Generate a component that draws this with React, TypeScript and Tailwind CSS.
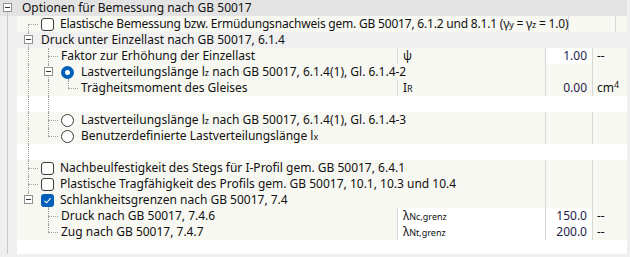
import React from "react";

type Ctrl = "none" | "check" | "checked" | "radio" | "radioOn";

type Row = {
  bg: "cream" | "gray" | "white";
  text?: React.ReactNode;
  pad?: string;
  tight?: boolean;
  ctrl?: Ctrl;
  box?: string;
  ctrlLeft?: string;
  v?: string[];
  h?: string;
  grid?: boolean;
  sym?: React.ReactNode;
  symWhite?: boolean;
  val?: string;
  valWhite?: boolean;
  unit?: React.ReactNode;
};

const font = { fontFamily: '"Noto Sans", "Open Sans", sans-serif' };

const Minus = ({ left }: { left: string }) => (
  <span
    className={`absolute top-[3px] ${left} w-[9px] h-[9px] border border-[#8f8f8f] bg-white flex items-center justify-center z-10`}
  >
    <span className="w-[5px] h-px bg-[#333]" />
  </span>
);

const Control = ({ kind }: { kind: Ctrl }) => {
  if (kind === "check")
    return <span className="block w-[13px] h-[13px] rounded-[3px] border border-[#3b3b3b] bg-white" />;
  if (kind === "checked")
    return (
      <span className="flex w-[13px] h-[13px] rounded-[3px] bg-[#005fb8] items-center justify-center">
        <svg width="9" height="9" viewBox="0 0 9 9">
          <path d="M1.5 4.8 L3.6 6.8 L7.6 2.2" fill="none" stroke="white" strokeWidth="1.1" />
        </svg>
      </span>
    );
  if (kind === "radio")
    return <span className="block w-[13px] h-[13px] rounded-full border border-[#3b3b3b] bg-white" />;
  if (kind === "radioOn")
    return (
      <span className="flex w-[13px] h-[13px] rounded-full bg-[#005fb8] items-center justify-center">
        <span className="w-[5px] h-[5px] rounded-full bg-white" />
      </span>
    );
  return null;
};

// subscripts sit on the baseline in a smaller size
const Sub = ({ children }: { children: React.ReactNode }) => (
  <span className="text-[9px] leading-none">{children}</span>
);

const rows: Row[] = [
  {
    bg: "cream",
    v: ["left-[11px] top-[8px] h-[8px]"],
    h: "left-[11px] w-[10px]",
    ctrl: "check",
    ctrlLeft: "left-[24px]",
    pad: "pl-[43px]",
    tight: true,
    grid: true,
    text: (
      <>
        Elastische Bemessung bzw. Ermüdungsnachweis gem. GB 50017, 6.1.2 und 8.1.1 (γ<Sub>y</Sub> = γ<Sub>z</Sub> = 1.0)
      </>
    ),
  },
  {
    bg: "gray",
    v: ["left-[11px] top-0 h-[16px]"],
    box: "left-[7px]",
    pad: "pl-[24px]",
    text: "Druck unter Einzellast nach GB 50017, 6.1.4",
  },
  {
    bg: "cream",
    v: ["left-[11px] top-0 h-[16px]", "left-[31px] top-0 h-[16px]"],
    h: "left-[31px] w-[10px]",
    pad: "pl-[44px]",
    grid: true,
    text: "Faktor zur Erhöhung der Einzellast",
    sym: "ψ",
    val: "1.00",
    valWhite: true,
    unit: "--",
  },
  {
    bg: "cream",
    v: ["left-[11px] top-0 h-[16px]", "left-[31px] top-0 h-[16px]", "left-[51px] top-[8px] h-[8px]"],
    box: "left-[27px]",
    ctrl: "radioOn",
    ctrlLeft: "left-[44px]",
    pad: "pl-[64px]",
    grid: true,
    text: (
      <>
        Lastverteilungslänge l<Sub>z</Sub> nach GB 50017, 6.1.4(1), Gl. 6.1.4-2
      </>
    ),
  },
  {
    bg: "cream",
    v: ["left-[11px] top-0 h-[16px]", "left-[31px] top-0 h-[16px]", "left-[51px] top-0 h-[8px]"],
    h: "left-[51px] w-[10px]",
    pad: "pl-[64px]",
    grid: true,
    text: "Trägheitsmoment des Gleises",
    sym: (
      <>
        I<Sub>R</Sub>
      </>
    ),
    val: "0.00",
    unit: (
      <>
        cm<span className="text-[9px] leading-none align-top">4</span>
      </>
    ),
  },
  {
    bg: "white",
    v: ["left-[11px] top-0 h-[16px]", "left-[31px] top-0 h-[16px]"],
  },
  {
    bg: "cream",
    v: ["left-[11px] top-0 h-[16px]", "left-[31px] top-0 h-[16px]"],
    h: "left-[31px] w-[10px]",
    ctrl: "radio",
    ctrlLeft: "left-[44px]",
    pad: "pl-[64px]",
    grid: true,
    text: (
      <>
        Lastverteilungslänge l<Sub>z</Sub> nach GB 50017, 6.1.4(1), Gl. 6.1.4-3
      </>
    ),
  },
  {
    bg: "cream",
    v: ["left-[11px] top-0 h-[16px]", "left-[31px] top-0 h-[8px]"],
    h: "left-[31px] w-[10px]",
    ctrl: "radio",
    ctrlLeft: "left-[44px]",
    pad: "pl-[64px]",
    grid: true,
    text: (
      <>
        Benutzerdefinierte Lastverteilungslänge l<Sub>x</Sub>
      </>
    ),
  },
  {
    bg: "white",
    v: ["left-[11px] top-0 h-[16px]"],
  },
  {
    bg: "cream",
    v: ["left-[11px] top-0 h-[16px]"],
    h: "left-[11px] w-[10px]",
    ctrl: "check",
    ctrlLeft: "left-[24px]",
    pad: "pl-[43px]",
    grid: true,
    text: "Nachbeulfestigkeit des Stegs für I-Profil gem. GB 50017, 6.4.1",
  },
  {
    bg: "cream",
    v: ["left-[11px] top-0 h-[16px]"],
    h: "left-[11px] w-[10px]",
    ctrl: "check",
    ctrlLeft: "left-[24px]",
    pad: "pl-[43px]",
    grid: true,
    text: "Plastische Tragfähigkeit des Profils gem. GB 50017, 10.1, 10.3 und 10.4",
  },
  {
    bg: "cream",
    v: ["left-[11px] top-0 h-[8px]", "left-[31px] top-[8px] h-[8px]"],
    box: "left-[7px]",
    ctrl: "checked",
    ctrlLeft: "left-[24px]",
    pad: "pl-[43px]",
    grid: true,
    text: "Schlankheitsgrenzen nach GB 50017, 7.4",
  },
  {
    bg: "cream",
    v: ["left-[31px] top-0 h-[16px]"],
    h: "left-[31px] w-[10px]",
    pad: "pl-[44px]",
    grid: true,
    text: "Druck nach GB 50017, 7.4.6",
    sym: (
      <>
        λ<Sub>Nc,grenz</Sub>
      </>
    ),
    symWhite: true,
    val: "150.0",
    valWhite: true,
    unit: "--",
  },
  {
    bg: "cream",
    v: ["left-[31px] top-0 h-[8px]"],
    h: "left-[31px] w-[10px]",
    pad: "pl-[44px]",
    grid: true,
    text: "Zug nach GB 50017, 7.4.7",
    sym: (
      <>
        λ<Sub>Nt,grenz</Sub>
      </>
    ),
    symWhite: true,
    val: "200.0",
    valWhite: true,
    unit: "--",
  },
];

const bgClass = { cream: "bg-[#f8f8f3]", gray: "bg-[#f0f0f0]", white: "bg-white" };

const TreeRow = ({ r }: { r: Row }) => {
  const tree = (
    <div className={`relative h-full ${r.sym ? "w-[380px] shrink-0" : "flex-1"}`}>
      {r.v?.map((c, i) => (
        <span key={i} className={`absolute w-0 border-l border-dotted border-[#a0a0a0] ${c}`} />
      ))}
      {r.h && <span className={`absolute top-[8px] h-0 border-t border-dotted border-[#a0a0a0] ${r.h}`} />}
      {r.box && <Minus left={r.box} />}
      {r.ctrl && (
        <span className={`absolute top-[2px] ${r.ctrlLeft}`}>
          <Control kind={r.ctrl} />
        </span>
      )}
      {r.text && (
        <div
          className={`${r.pad} ${r.tight ? "tracking-[-0.2px]" : ""} h-full whitespace-nowrap leading-[16px] text-[12px] text-[#111]`}
        >
          {r.text}
        </div>
      )}
    </div>
  );
  return (
    <div className={`flex h-[16px] ${bgClass[r.bg]}`}>
      {tree}
      {r.sym && (
        <div
          className={`flex-1 h-full border-l border-[#d8d8d8] pl-[5px] leading-[16px] text-[12px] text-[#111] whitespace-nowrap ${
            r.symWhite ? "bg-white" : ""
          }`}
        >
          {r.sym}
        </div>
      )}
      {r.grid && (
        <>
          <div
            className={`w-[47px] shrink-0 h-full border-l border-[#d8d8d8] pr-[5px] text-right leading-[16px] text-[12px] text-[#1c1c4a] ${
              r.valWhite ? "bg-white" : ""
            }`}
          >
            {r.val}
          </div>
          <div className="w-[35px] shrink-0 h-full border-l border-[#d8d8d8] pl-[4px] leading-[16px] text-[12px] text-[#111] whitespace-nowrap">
            {r.unit}
          </div>
        </>
      )}
    </div>
  );
};

export default function App() {
  return (
    <div className="w-[630px] h-[257px] bg-[#efefef] flex flex-col overflow-hidden" style={font}>
      <div className="relative flex h-[16px] w-[627px] bg-[#e3e3e3] shrink-0">
        <Minus left="left-[3px]" />
        <span className="absolute left-[7px] top-[12px] h-[4px] w-0 border-l border-[#c8c8c8]" />
        <div className="pl-[22px] leading-[16px] text-[12px] text-[#111] whitespace-nowrap">
          Optionen für Bemessung nach GB 50017
        </div>
      </div>
      <div className="flex flex-1 pb-[3px]">
        <div className="w-[17px] shrink-0 relative">
          <span className="absolute left-[7px] top-0 bottom-0 w-0 border-l border-[#c8c8c8]" />
        </div>
        <div className="w-[610px] flex flex-col bg-white">
          {rows.map((r, i) => (
            <TreeRow key={i} r={r} />
          ))}
        </div>
      </div>
    </div>
  );
}
